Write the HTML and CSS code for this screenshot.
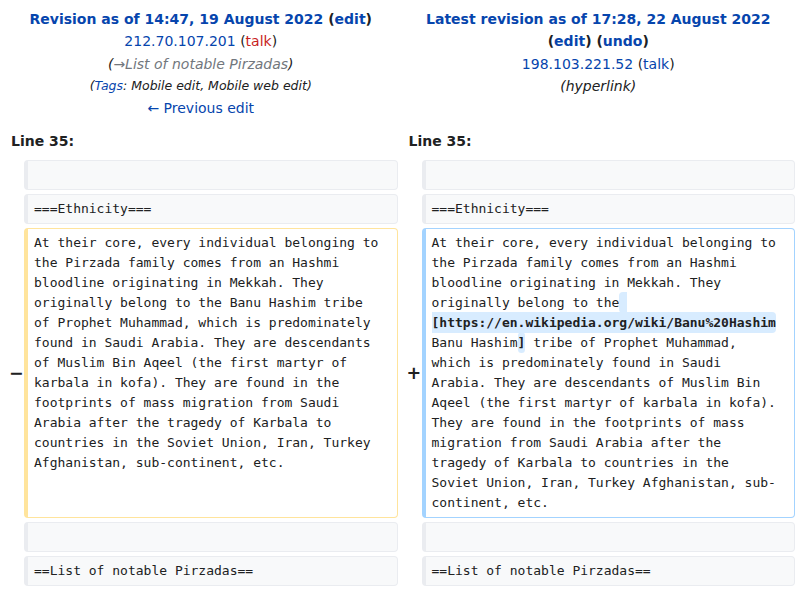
FILE: index.html
```html
<!DOCTYPE html>
<html lang="en">
<head>
<meta charset="utf-8">
<title>Pirzada: Difference between revisions</title>
<link rel="stylesheet" href="styles.css">
</head>
<body>
<table class="diff">
  <colgroup>
    <col class="c-marker"><col class="c-content"><col class="c-marker"><col class="c-content">
  </colgroup>
  <tr class="diff-title">
    <td colspan="2" class="diff-otitle">
      <div class="b"><a href="#">Revision as of 14:47, 19 August 2022</a> (<a href="#">edit</a>)</div>
      <div><a href="#">212.70.107.201</a> (<a href="#" class="new">talk</a>)</div>
      <div class="comment">(<span class="autocomment">→List of notable Pirzadas</span>)</div>
      <div class="tags">(<a href="#">Tags</a>: Mobile edit, Mobile web edit)</div>
      <div><a href="#">← Previous edit</a></div>
    </td>
    <td colspan="2" class="diff-ntitle">
      <div class="b"><a href="#">Latest revision as of 17:28, 22 August 2022</a> (<a href="#">edit</a>) (<a href="#">undo</a>)</div>
      <div><a href="#">198.103.221.52</a> (<a href="#">talk</a>)</div>
      <div class="comment">(hyperlink)</div>
    </td>
  </tr>
  <tr>
    <td colspan="2" class="diff-lineno">Line 35:</td>
    <td colspan="2" class="diff-lineno">Line 35:</td>
  </tr>
  <tr>
    <td class="diff-marker"></td>
    <td class="diff-context"><br></td>
    <td class="diff-marker"></td>
    <td class="diff-context"><br></td>
  </tr>
  <tr>
    <td class="diff-marker"></td>
    <td class="diff-context">===Ethnicity===</td>
    <td class="diff-marker"></td>
    <td class="diff-context">===Ethnicity===</td>
  </tr>
  <tr>
    <td class="diff-marker"><span class="mk">−</span></td>
    <td class="diff-deletedline">At their core, every individual belonging to the Pirzada family comes from an Hashmi bloodline originating in Mekkah. They originally belong to the Banu Hashim tribe of Prophet Muhammad, which is predominately found in Saudi Arabia. They are descendants of Muslim Bin Aqeel (the first martyr of karbala in kofa). They are found in the footprints of mass migration from Saudi Arabia after the tragedy of Karbala to countries in the Soviet Union, Iran, Turkey Afghanistan, sub-continent, etc.</td>
    <td class="diff-marker"><span class="mk">+</span></td>
    <td class="diff-addedline">At their core, every individual belonging to the Pirzada family comes from an Hashmi bloodline originating in Mekkah. They originally belong to the<span class="diffchange"> [https://en.wikipedia.org/wiki/Banu%20Hashim</span> Banu Hashim<span class="diffchange">]</span> tribe of Prophet Muhammad, which is predominately found in Saudi Arabia. They are descendants of Muslim Bin Aqeel (the first martyr of karbala in kofa). They are found in the footprints of mass migration from Saudi Arabia after the tragedy of Karbala to countries in the Soviet Union, Iran, Turkey Afghanistan, sub-continent, etc.</td>
  </tr>
  <tr>
    <td class="diff-marker"></td>
    <td class="diff-context"><br></td>
    <td class="diff-marker"></td>
    <td class="diff-context"><br></td>
  </tr>
  <tr>
    <td class="diff-marker"></td>
    <td class="diff-context">==List of notable Pirzadas==</td>
    <td class="diff-marker"></td>
    <td class="diff-context">==List of notable Pirzadas==</td>
  </tr>
</table>
</body>
</html>
```

FILE: styles.css
```css
html, body {
  margin: 0;
  padding: 0;
  background: #fff;
}
body {
  font-family: "DejaVu Sans", sans-serif;
  font-size: 14px;
  color: #202122;
}
a {
  color: #0645ad;
  text-decoration: none;
}
a.new {
  color: #c81e1e;
}
table.diff {
  width: 100%;
  border-collapse: separate;
  border-spacing: 4px;
  table-layout: fixed;
}
col.c-marker {
  width: 16px;
}
td {
  padding: 0;
}
.diff-title td {
  text-align: center;
  vertical-align: top;
  line-height: 22.3px;
  padding: 4px 7px 1px;
}
.b {
  font-weight: bold;
}
.comment {
  font-style: italic;
}
.autocomment {
  color: #72777d;
}
.tags {
  font-style: italic;
  font-size: 12.5px;
}
.diff-lineno {
  font-weight: bold;
  line-height: 22px;
  padding: 6px 7px 4px;
}
.diff-marker {
  font-weight: bold;
  font-size: 17.5px;
  line-height: 1.2;
  vertical-align: middle;
  white-space: nowrap;
  text-align: left;
}
.mk {
  margin-left: 5px;
}
.diff-context,
.diff-deletedline,
.diff-addedline {
  font-family: "DejaVu Sans Mono", monospace;
  font-size: 13px;
  line-height: 20px;
  white-space: pre-wrap;
  overflow-wrap: break-word;
  vertical-align: top;
  border-style: solid;
  border-width: 1px 1px 1px 4px;
  border-radius: 4px;
  padding: 4px 14px 4px 6px;
}
.diff-context {
  background: #f8f9fa;
  border-color: #eaecf0;
}
.diff-deletedline {
  border-color: #ffe49c;
}
.diff-addedline {
  border-color: #a3d3ff;
}
.diffchange {
  font-weight: bold;
  background: #d8ecff;
  border-radius: 4px;
  padding: 3px 0;
}
```
